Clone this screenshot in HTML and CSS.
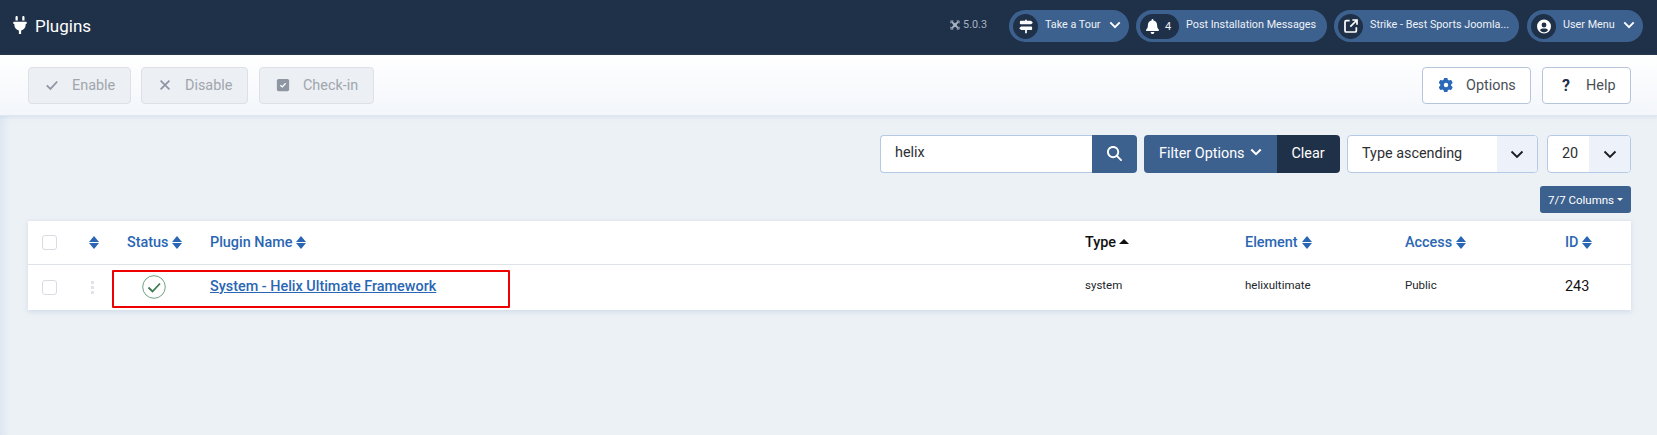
FILE: index.html
```html
<!DOCTYPE html>
<html lang="en">
<head>
<meta charset="utf-8">
<title>Plugins</title>
<link rel="stylesheet" href="styles.css">
</head>
<body>
<header class="topbar">
  <div class="page-title">
    <svg class="plug" viewBox="0 0 384 512"><path d="M96 0c-18 0-32 14-32 32v96h64V32c0-18-14-32-32-32zm192 0c-18 0-32 14-32 32v96h64V32c0-18-14-32-32-32zM16 160c-9 0-16 7-16 16v32c0 9 7 16 16 16h16v32c0 77 55 142 128 157v99h64v-99c73-15 128-80 128-157v-32h16c9 0 16-7 16-16v-32c0-9-7-16-16-16H16z"/></svg>
    <span>Plugins</span>
  </div>
  <div class="top-right">
    <span class="version"><svg class="joomla" viewBox="0 0 12 12"><path d="M2 2l8 8M10 2l-8 8"/><path class="j2" d="M1 4V1h3M8 1h3v3M11 8v3H8M4 11H1V8M3.500 6L6 3.500 8.500 6 6 8.500z"/></svg>5.0.3</span>
    <a class="pill pill-tour"><span class="pill-ico"><svg viewBox="0 0 512 512"><path d="M224 32c0-18 14-32 32-32s32 14 32 32v16h140c7 0 13 3 18 8l50 46c6 6 6 16 0 22l-50 46c-5 5-11 8-18 8H64c-18 0-32-14-32-32V80c0-18 14-32 32-32h160V32zM32 256h416c18 0 32 14 32 32v64c0 18-14 32-32 32H288v96c0 18-14 32-32 32s-32-14-32-32v-96H84c-7 0-13-3-18-8l-50-46c-6-6-6-16 0-22l50-46c5-5 11-8 16-8z"/></svg></span><span class="pill-text">Take a Tour</span><svg class="pill-chev" viewBox="0 0 14 9"><path d="M1.500 1.500L7 7l5.500-5.500"/></svg></a>
    <a class="pill pill-post"><span class="pill-ico wide"><svg viewBox="0 0 448 512"><path d="M224 0c-18 0-32 14-32 32v19C119 66 64 131 64 208v19c0 47-17 92-49 127l-7 8c-8 9-10 22-5 34s16 18 29 18h384c13 0 24-8 29-18s3-25-5-34l-7-8c-32-35-49-80-49-127v-19c0-77-55-142-128-157V32c0-18-14-32-32-32zm45 493c12-12 19-28 19-45H160c0 17 7 33 19 45s28 19 45 19 33-7 45-19z"/></svg><b>4</b></span><span class="pill-text">Post Installation Messages</span></a>
    <a class="pill pill-site"><span class="pill-ico"><svg class="ext" viewBox="0 0 24 24"><path d="M10 4H5a2 2 0 0 0-2 2v13a2 2 0 0 0 2 2h13a2 2 0 0 0 2-2v-5M14 3h7v7M21 3l-10 10"/></svg></span><span class="pill-text">Strike - Best Sports Joomla...</span></a>
    <a class="pill pill-user"><span class="pill-ico"><svg viewBox="0 0 512 512"><path fill-rule="evenodd" d="M256 0a256 256 0 1 0 0 512 256 256 0 0 0 0-512zm0 112a88 88 0 1 1 0 176 88 88 0 0 1 0-176zm0 352c-60 0-113-30-146-74 15-36 50-62 90-62h112c40 0 75 26 90 62-33 44-86 74-146 74z"/></svg></span><span class="pill-text">User Menu</span><svg class="pill-chev" viewBox="0 0 14 9"><path d="M1.500 1.500L7 7l5.500-5.500"/></svg></a>
  </div>
</header>

<div class="toolbar">
  <div class="tool-group">
    <button class="tbtn off b-enable"><svg class="ti" viewBox="0 0 16 16"><path class="st" d="M2 8.500L6.200 12.500 14 4"/></svg>Enable</button>
    <button class="tbtn off b-disable"><svg class="ti" viewBox="0 0 16 16"><path class="st" d="M3 3l10 10M13 3L3 13"/></svg>Disable</button>
    <button class="tbtn off b-check"><svg class="ti" viewBox="0 0 16 16"><rect x="1" y="1" width="14" height="14" rx="2" class="fl"/><path class="ck" d="M5 8.200l2.200 2L11 6"/></svg>Check-in</button>
  </div>
  <div class="tool-group right">
    <button class="tbtn on btn-options"><svg class="ti gear" viewBox="0 0 512 512"><path fill-rule="evenodd" d="M495 167c3 9 0 18-7 24l-43 39a191 191 0 0 1 0 50l43 39c7 6 10 15 7 24a256 256 0 0 1-23 50l-5 8c-7 11-14 22-23 32-6 7-15 9-24 6l-56-18a197 197 0 0 1-43 25l-12 57c-2 9-9 16-18 18a276 276 0 0 1-91 0c-9-2-16-9-18-18l-12-57a197 197 0 0 1-43-25l-56 18c-9 3-18 1-24-6-9-10-16-21-23-32l-5-8a256 256 0 0 1-23-50c-3-9 0-18 7-24l43-39a191 191 0 0 1 0-50l-43-39c-7-6-10-15-7-24a256 256 0 0 1 23-50l5-8c7-11 14-22 23-32 6-7 15-9 24-6l56 18a197 197 0 0 1 43-25l12-57c2-9 9-16 18-18a276 276 0 0 1 91 0c9 2 16 9 18 18l12 57a197 197 0 0 1 43 25l56-18c9-3 18-1 24 6 9 10 16 21 23 32l5 8a256 256 0 0 1 23 50zM256 336a80 80 0 1 0 0-160 80 80 0 0 0 0 160z"/></svg>Options</button>
    <button class="tbtn on btn-help"><span class="qmark">?</span>Help</button>
  </div>
</div>

<main class="content">
  <div class="filters">
    <div class="search">
      <span class="search-input">helix</span>
      <span class="search-btn"><svg viewBox="0 0 512 512"><path d="M416 208c0 46-15 88-40 123l127 126c12 13 12 33 0 46s-33 12-46 0L331 376c-35 25-77 40-123 40C93 416 0 323 0 208S93 0 208 0s208 93 208 208zM208 352a144 144 0 1 0 0-288 144 144 0 0 0 0 288z"/></svg></span>
    </div>
    <div class="filter-group">
      <span class="fbtn">Filter Options<svg viewBox="0 0 14 9"><path d="M1.500 1.500L7 7l5.500-5.500"/></svg></span>
      <span class="clear">Clear</span>
    </div>
    <div class="select sel-order"><span>Type ascending</span><i><svg viewBox="0 0 14 9"><path d="M1.500 1.500L7 7l5.500-5.500"/></svg></i></div>
    <div class="select sel-num"><span>20</span><i><svg viewBox="0 0 14 9"><path d="M1.500 1.500L7 7l5.500-5.500"/></svg></i></div>
  </div>
  <div class="columns-row"><span class="columns">7/7 Columns</span></div>

  <div class="table">
    <div class="tr thead">
      <div class="c c-check"><span class="box"></span></div>
      <div class="c c-order"><span class="sort"></span></div>
      <div class="c c-status th">Status<span class="sort"></span></div>
      <div class="c c-name th">Plugin Name<span class="sort"></span></div>
      <div class="c c-type th active">Type<span class="caret-up"></span></div>
      <div class="c c-el th">Element<span class="sort"></span></div>
      <div class="c c-acc th">Access<span class="sort"></span></div>
      <div class="c c-id th">ID<span class="sort"></span></div>
    </div>
    <div class="tr tbody">
      <div class="c c-check"><span class="box"></span></div>
      <div class="c c-order"><span class="dots"></span></div>
      <div class="c c-status"><span class="ok"><svg viewBox="0 0 24 24"><circle cx="12" cy="12" r="11.300"/><path d="M6.500 12.500l4 4 7.500-8"/></svg></span></div>
      <div class="c c-name"><a class="plugin-link">System - Helix Ultimate Framework</a></div>
      <div class="c c-type small">system</div>
      <div class="c c-el small">helixultimate</div>
      <div class="c c-acc small">Public</div>
      <div class="c c-id big">243</div>
      <span class="red-box"></span>
    </div>
  </div>
</main>
</body>
</html>
```

FILE: styles.css
```css
* { box-sizing: border-box; }
html, body { margin: 0; height: 100%; }
body {
  font-family: Roboto, "Liberation Sans", sans-serif;
  background: #ecf1f6;
  color: #22262a;
  overflow: hidden;
  position: relative;
}
body::before {
  content: "";
  position: absolute;
  left: 0; top: 55px; bottom: 0;
  width: 10px;
  background: linear-gradient(90deg, #dde6f2, rgba(236,241,246,0));
}
.topbar {
  height: 55px;
  background: #1f3049;
  display: flex;
  align-items: center;
  justify-content: space-between;
  padding-left: 13px;
  color: #fff;
}
.page-title { display: flex; align-items: center; gap: 8px; font-size: 17px; margin-top: -3px; }
.plug { width: 14px; height: 18px; fill: #fff; margin-top: -3px; }
.top-right { display: flex; align-items: center; gap: 7px; padding-right: 14px; font-size: 10.800px; margin-top: -3px; }
.version { color: #a8b3c2; display: flex; align-items: center; gap: 3px; margin-right: 15px; margin-top: -3px; }
.joomla { width: 10px; height: 10px; fill: none; stroke: #a8b3c2; stroke-width: 2.200; }
.joomla .j2 { stroke-width: 1; }
.pill {
  height: 32px;
  background: #3d618f;
  border-radius: 16px;
  display: flex;
  align-items: center;
  padding-left: 4px;
  color: #eef2f7;
  white-space: nowrap;
}
.pill-ico {
  background: #1f3049;
  width: 25px;
  height: 25px;
  border-radius: 13px;
  display: flex;
  align-items: center;
  justify-content: center;
  flex: none;
  margin-right: 7px;
}
.pill-text { margin-top: -3px; }
.pill-ico svg { width: 14px; height: 15px; fill: #fff; }
.pill-ico svg.ext { fill: none; stroke: #fff; stroke-width: 2.600; width: 16px; height: 16px; }
.pill-ico.wide { width: 39px; justify-content: flex-start; padding-left: 6px; gap: 6px; }
.pill-ico.wide svg { width: 13px; }
.pill-ico b { font-weight: 400; font-size: 11px; }
.pill-chev { width: 12px; height: 8px; fill: none; stroke: #fff; stroke-width: 2.200; margin-left: 8px; margin-top: -3px; }
.pill-tour { width: 120px; }
.pill-post { width: 191px; }
.pill-site { width: 185px; }
.pill-user { width: 116px; margin-left: 1px; }

.toolbar {
  height: 61px;
  background: linear-gradient(180deg, #fff 0%, #f3f6fb 100%);
  border-bottom: 1px solid #dfe6f0;
  box-shadow: 0 1px 4px rgba(150,170,200,.25);
  display: flex;
  justify-content: space-between;
  align-items: flex-start;
  padding: 12px 26px 0 28px;
  position: relative;
}
.tool-group { display: flex; gap: 10px; }
.tool-group.right { gap: 11px; }
.tbtn {
  height: 37px;
  font: 400 14.400px Roboto, sans-serif;
  border-radius: 4px;
  display: flex;
  align-items: center;
  padding: 0 0 1px 16px;
  white-space: nowrap;
}
.tbtn.off { background: #eceff3; border: 1px solid #dde1e7; color: #a0a6ae; }
.tbtn.on { background: #fff; border: 1px solid #b6c5da; color: #495057; }
.b-enable { width: 103px; }
.b-disable { width: 107px; }
.b-check { width: 115px; margin-left: 1px; }
.btn-options { width: 109px; }
.btn-help { width: 89px; }
.ti { width: 14px; height: 14px; margin-right: 13px; flex: none; }
.ti .st { fill: none; stroke: #8e96a3; stroke-width: 2; }
.ti .fl { fill: #8e96a3; }
.ti .ck { fill: none; stroke: #fff; stroke-width: 1.500; }
.gear { fill: #2a69b8; }
.qmark { font-weight: 700; font-size: 16px; color: #1f3049; width: 14px; text-align: center; margin-right: 13px; }

.content { padding: 19px 26px 0 28px; }
.filters { display: flex; justify-content: flex-end; height: 38px; }
.search { display: flex; width: 257px; margin-right: 7px; }
.search-input {
  flex: 1;
  background: #fff;
  border: 1px solid #b6c9e4;
  border-right: 0;
  border-radius: 4px 0 0 4px;
  padding-left: 14px;
  font-size: 14.400px;
  line-height: 34px;
  color: #2d2f33;
}
.search-btn {
  width: 45px;
  background: #3d618f;
  border-radius: 0 4px 4px 0;
  display: flex;
  align-items: center;
  justify-content: center;
}
.search-btn svg { width: 15px; height: 15px; fill: #fff; margin-top: -2px; }
.filter-group { display: flex; margin-right: 7px; }
.fbtn {
  width: 133px;
  background: #3d618f;
  color: #fff;
  font-size: 14.400px;
  border-radius: 4px 0 0 4px;
  display: flex;
  align-items: center;
  padding: 0 0 2px 15px;
}
.fbtn svg { width: 12px; height: 8px; margin-left: 5px; margin-top: -2px; fill: none; stroke: #fff; stroke-width: 2.400; }
.clear {
  width: 63px;
  background: #1f3049;
  color: #fff;
  font-size: 14.400px;
  border-radius: 0 4px 4px 0;
  display: flex;
  align-items: center;
  justify-content: center;
  padding: 0 1px 2px 0;
}
.select {
  background: #fff;
  border: 1px solid #b6c9e4;
  border-radius: 4px;
  display: flex;
  align-items: center;
  justify-content: space-between;
  font-size: 14.400px;
  color: #2d2f33;
  overflow: hidden;
}
.select span { padding: 0 0 2px 14px; }
.select i { width: 40px; height: 100%; background: #edf2fa; display: flex; align-items: center; justify-content: center; }
.select svg { width: 14px; height: 9px; fill: none; stroke: #1a1d21; stroke-width: 1.900; }
.sel-order { width: 191px; margin-right: 9px; }
.sel-num { width: 84px; }
.sel-num i { width: 41px; }
.columns-row { display: flex; justify-content: flex-end; margin-top: 13px; }
.columns {
  width: 91px;
  height: 27px;
  background: #3d618f;
  color: #fff;
  font-size: 11.500px;
  border-radius: 3px;
  display: flex;
  align-items: center;
  justify-content: center;
  gap: 3px;
}
.columns::after {
  content: "";
  border: 3.500px solid transparent;
  border-top-color: #fff;
  border-bottom: 0;
  margin-top: -1px;
}
.table {
  margin-top: 7px;
  background: #fff;
  box-shadow: 0 2px 5px rgba(160,180,205,.35);
  border-top: 1px solid #e4e8ee;
}
.tr { display: flex; align-items: center; position: relative; padding-left: 14px; }
.thead { height: 44px; border-bottom: 1px solid #dfe3e8; }
.tbody { height: 45px; }
.c { display: flex; align-items: center; flex: none; white-space: nowrap; }
.c-check { width: 48px; }
.c-order { width: 37px; }
.c-status { width: 83px; }
.c-name { width: 875px; }
.c-type { width: 160px; }
.c-el { width: 160px; }
.c-acc { width: 160px; }
.c-id { width: 60px; }
.th { font-size: 14.400px; font-weight: 500; color: #2a66b3; gap: 4px; }
.th.active { color: #111; gap: 3px; }
.box { width: 15px; height: 15px; border: 1px solid #d8dce2; border-radius: 3px; background: #fff; }
.sort { display: inline-block; width: 10px; height: 13px; position: relative; }
.sort::before, .sort::after {
  content: "";
  position: absolute;
  left: 0;
  border-left: 5px solid transparent;
  border-right: 5px solid transparent;
}
.sort::before { top: 0; border-bottom: 6px solid #2a66b3; }
.sort::after { bottom: 0; border-top: 6px solid #2a66b3; }
.c-order .sort { margin-left: -1px; }
.caret-up {
  border-left: 5px solid transparent;
  border-right: 5px solid transparent;
  border-bottom: 5px solid #111;
  margin-top: -3px;
}
.dots {
  display: block;
  width: 3px;
  height: 13px;
  margin-left: 1px;
  background: radial-gradient(circle at 1.500px 1.500px, #dfe2e7 1.400px, transparent 1.600px) 0 0 / 3px 5px repeat-y;
}
.ok { width: 24px; height: 24px; margin-left: 15px; margin-top: -1px; }
.ok svg { display: block; width: 24px; height: 24px; fill: none; }
.ok circle { stroke: #4a8a62; stroke-width: .8; }
.ok path { stroke: #3c7a52; stroke-width: 1.800; }
.plugin-link { font-size: 14.400px; font-weight: 500; color: #2a66b3; text-decoration: underline; margin-top: -3px; }
.small { font-size: 11.500px; color: #22262a; margin-top: -5px; }
.big { font-size: 14.400px; color: #111; margin-top: -3px; }
.red-box {
  position: absolute;
  left: 84px;
  top: 5px;
  width: 398px;
  height: 38px;
  border: 2px solid #ee0000;
  border-radius: 1px;
}
```
